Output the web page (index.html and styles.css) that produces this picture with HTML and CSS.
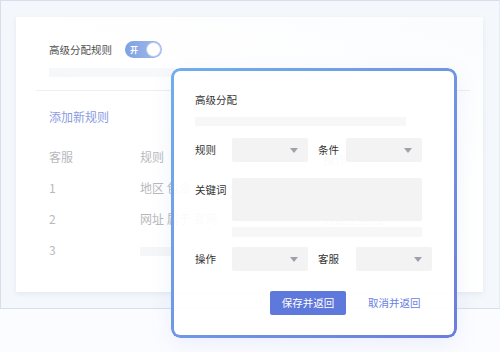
FILE: index.html
```html
<!DOCTYPE html>
<html lang="zh-CN">
<head>
<meta charset="utf-8">
<title>高级分配规则</title>
<link rel="stylesheet" href="styles.css">
</head>
<body>
<div class="frame">
  <div class="card">
    <div class="head">
      <span class="head-title">高级分配规则</span>
      <span class="toggle"><span class="toggle-text">开</span><span class="knob"></span></span>
    </div>
    <div class="bar-fade"></div>
    <div class="divider"></div>
    <div class="add">添加新规则</div>
    <div class="table">
      <span>客服</span><span>规则</span><span class="ghost-head">操作</span>
      <span>1</span><span>地区 包含</span><span></span>
      <span>2</span><span>网址 属于 官网</span><span>分配至客服</span>
      <span>3</span><span><i class="cell-bar"></i></span><span></span>
    </div>
  </div>
</div>

<div class="modal">
  <div class="modal-title">高级分配</div>
  <div class="modal-bar"></div>
  <div class="row">
    <span class="label">规则</span>
    <span class="select"><i class="caret"></i></span>
    <span class="label label2">条件</span>
    <span class="select"><i class="caret"></i></span>
  </div>
  <div class="row row-kw">
    <span class="label kw">关键词</span>
    <span class="textarea"></span>
  </div>
  <div class="kw-bar"></div>
  <div class="row row-op">
    <span class="label">操作</span>
    <span class="select"><i class="caret"></i></span>
    <span class="label label3">客服</span>
    <span class="select"><i class="caret"></i></span>
  </div>
  <div class="actions">
    <span class="btn">保存并返回</span>
    <span class="link">取消并返回</span>
  </div>
</div>
</body>
</html>
```

FILE: styles.css
```css
* { box-sizing: border-box; }
html, body {
  margin: 0;
  padding: 0;
}
body {
  width: 500px;
  height: 352px;
  overflow: hidden;
  position: relative;
  background: linear-gradient(180deg, #ffffff 0%, #fbfcff 100%);
  font-family: "Noto Sans CJK SC", "Noto Sans", sans-serif;
}
.frame {
  width: 500px;
  height: 309px;
  background: #f4f7fb;
  border: 1px solid #d6e0ec;
  border-right-color: #e6edf5;
  padding: 16px 16px 16px 15px;
}
.card {
  height: 275px;
  background: linear-gradient(200deg, #fbfcfe 0%, #ffffff 40%);
  box-shadow: 0 2px 5px rgba(120, 140, 170, 0.12);
  padding: 24px 13px 0 33px;
}
.head {
  display: flex;
  align-items: center;
  gap: 13px;
  height: 17px;
}
.head-title {
  font-size: 10.5px;
  color: #4f4f4f;
  line-height: 14px;
}
.toggle {
  position: relative;
  width: 37px;
  height: 17px;
  border-radius: 9px;
  background: linear-gradient(90deg, #7ea2e2 0%, #a4b9ec 100%);
  display: flex;
  align-items: center;
}
.toggle-text {
  font-size: 8px;
  color: #fff;
  margin-left: 5px;
  line-height: 10px;
  font-weight: bold;
}
.knob {
  position: absolute;
  right: 1px;
  top: 1px;
  width: 15px;
  height: 15px;
  border-radius: 50%;
  background: #fff;
  border: 1px solid #b9c8ef;
}
.bar-fade {
  margin-top: 10px;
  height: 9px;
  width: 260px;
  background: linear-gradient(90deg, #f6f7f9 0%, #f8f9fb 60%, rgba(250,251,252,0) 100%);
}
.divider {
  margin: 13px 0 0 -13px;
  height: 1px;
  background: #eceff3;
}
.add {
  margin-top: 18px;
  font-size: 12px;
  line-height: 16px;
  color: #8c9ce2;
}
.table {
  margin-top: 16px;
  display: grid;
  grid-template-columns: 91px 183px 1fr;
  grid-auto-rows: 31px;
  font-size: 12px;
  line-height: 31px;
  color: #b7b9bd;
}
.table span { white-space: nowrap; }
.ghost-head { padding-top: 3px; }
.cell-bar {
  display: inline-block;
  width: 31px;
  height: 9px;
  background: #f5f6f8;
  vertical-align: middle;
}

/* modal overlay */
.modal {
  position: absolute;
  left: 171px;
  top: 68px;
  width: 286px;
  height: 270px;
  border-radius: 9px;
  background: rgba(255, 255, 255, 0.93);
  padding: 25px 0 0 24px;
  box-shadow: 0 6px 22px rgba(100, 125, 215, 0.10);
}
.modal::before {
  content: "";
  position: absolute;
  inset: 0;
  border-radius: 9px;
  padding: 3px;
  background: linear-gradient(135deg, #70aeea 0%, #6f97e4 50%, #6b7ddf 100%);
  -webkit-mask: linear-gradient(#000 0 0) content-box, linear-gradient(#000 0 0);
  -webkit-mask-composite: xor;
  mask: linear-gradient(#000 0 0) content-box exclude, linear-gradient(#000 0 0);
  pointer-events: none;
}
.modal-title {
  font-size: 10.5px;
  line-height: 14px;
  color: #333;
}
.modal-bar {
  margin-top: 10px;
  width: 211px;
  height: 9px;
  background: #f7f7f8;
}
.row {
  display: flex;
  align-items: center;
  margin-top: 12px;
  height: 24px;
}
.label {
  width: 37px;
  font-size: 10.5px;
  line-height: 14px;
  color: #333;
  flex: none;
}
.label2 { margin-left: 10px; width: 28px; }
.label3 { margin-left: 10px; width: 38px; }
.select {
  width: 76px;
  height: 24px;
  background: #f3f3f4;
  border-radius: 2px;
  display: flex;
  align-items: center;
  justify-content: flex-end;
  padding-right: 10px;
  flex: none;
}
.caret {
  width: 0;
  height: 0;
  border-left: 4.5px solid transparent;
  border-right: 4.5px solid transparent;
  border-top: 5px solid #9da2ab;
}
.row-kw {
  margin-top: 16px;
  height: 43px;
  align-items: flex-start;
}
.kw { padding-top: 5px; }
.textarea {
  width: 190px;
  height: 43px;
  background: #f3f3f4;
  border-radius: 2px;
}
.kw-bar {
  margin: 6px 0 0 37px;
  width: 190px;
  height: 10px;
  background: #f7f7f8;
}
.row-op { margin-top: 10px; }
.actions {
  margin: 20px 0 0 75px;
  display: flex;
  align-items: center;
  gap: 22px;
}
.btn {
  width: 76px;
  height: 24px;
  border-radius: 2px;
  background: #5f78db;
  color: #fff;
  font-size: 10.5px;
  line-height: 24px;
  text-align: center;
}
.link {
  font-size: 10.5px;
  color: #6a7fde;
  line-height: 14px;
}
```
